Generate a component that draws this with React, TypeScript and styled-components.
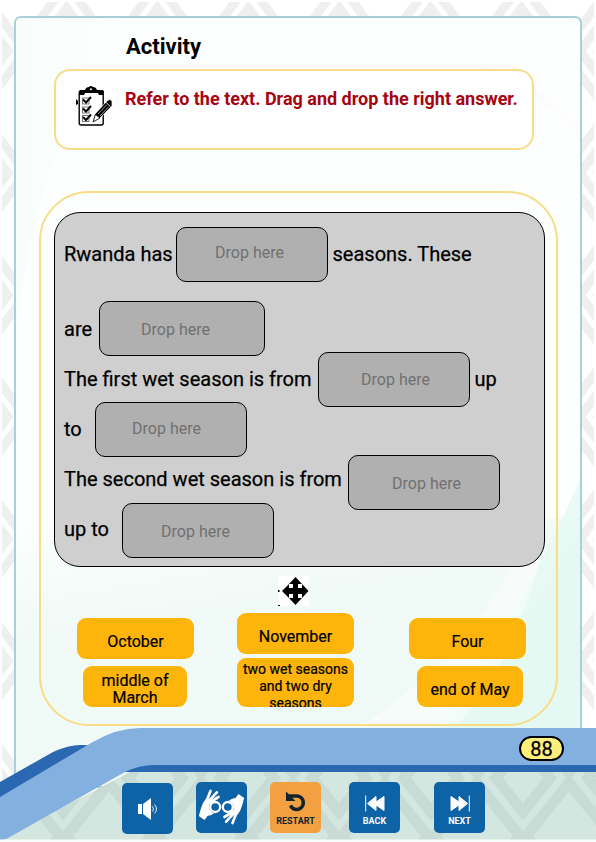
import React from "react";
import styled, { createGlobalStyle } from "styled-components";

const GlobalStyle = createGlobalStyle`
  * { box-sizing: border-box; }
  body { margin: 0; background: #fff; font-family: Roboto, sans-serif; color: #000; }
`;

const Page = styled.main`
  position: relative;
  display: flow-root;
  width: 596px;
  height: 842px;
  overflow: hidden;
  background: #fff;
`;

const Layer = styled.svg`
  position: absolute;
  inset: 0;
  display: block;
`;

const Sheet = styled.section`
  position: relative;
  width: 568px;
  height: 772px;
  margin: 16px 0 -60px 14px;
  border: 2px solid #a9d0d8;
  border-radius: 7px;
  overflow: hidden;
  background: #fdfffe;
`;

const SheetBody = styled.div`
  position: relative;
  display: flex;
  flex-direction: column;
`;

const Title = styled.h1`
  margin: 15px 0 0 110px;
  height: 36px;
  font-size: 22px;
  line-height: 28px;
  font-weight: 700;
`;

const Instruction = styled.div`
  display: flex;
  width: 480px;
  height: 81px;
  margin-left: 38px;
  padding: 15px 0 0 20px;
  border: 2px solid #f9dc87;
  border-radius: 16px;
  background: #fff;
`;

const InstructionText = styled.p`
  margin: 1px 0 0 12px;
  color: #a80410;
  font-size: 18px;
  line-height: 24px;
  font-weight: 700;
  white-space: nowrap;
`;

const Activity = styled.div`
  width: 519px;
  height: 535px;
  margin: 41px 0 0 23px;
  padding: 19px 0 0 13px;
  border: 2px solid #f9dc87;
  border-radius: 50px;
`;

const Passage = styled.div`
  width: 491px;
  height: 355px;
  padding: 16px 0 0 9px;
  border: 1px solid #000;
  border-radius: 26px;
  background: #cfcfcf;
`;

const Line = styled.div<{ $after?: number }>`
  display: flex;
  align-items: center;
  height: 50px;
  margin-bottom: ${(p) => p.$after ?? 0}px;
  font-size: 20px;
  white-space: nowrap;
`;

const Phrase = styled.span<{ $width: number }>`
  flex: none;
  width: ${(p) => p.$width}px;
  -webkit-text-stroke: 0.25px #000;
`;

const Slot = styled.div<{ $width?: number; $drop?: number; $dx?: number; $dy?: number }>`
  flex: none;
  display: flex;
  align-items: center;
  justify-content: center;
  width: ${(p) => p.$width ?? 152}px;
  height: 55px;
  margin-top: ${(p) => p.$drop ?? 0}px;
  margin-right: 4.5px;
  border: 1px solid #000;
  border-radius: 10px;
  background: #b0b0b0;
  color: #707070;
  font-size: 16px;

  span { transform: translate(${(p) => p.$dx ?? 0}px, ${(p) => p.$dy ?? 0}px); }
`;

const MoveHandle = styled.div`
  width: 31px;
  height: 30px;
  margin: 9px 0 0 224px;
  background: #fff;
  svg { display: block; }
`;

const Answers = styled.div`
  display: flex;
  margin: 7px 0 0 23px;
`;

const AnswerColumn = styled.div<{ $top: number; $left: number; $gap: number }>`
  display: flex;
  flex-direction: column;
  align-items: center;
  width: 117px;
  gap: ${(p) => p.$gap}px;
  margin: ${(p) => p.$top}px 0 0 ${(p) => p.$left}px;
`;

const Answer = styled.div<{ $width?: number; $height?: number; $pad?: number; $small?: boolean; $shift?: number }>`
  width: ${(p) => p.$width ?? 117}px;
  height: ${(p) => p.$height ?? 41}px;
  padding-top: ${(p) => p.$pad ?? 13}px;
  margin-left: ${(p) => p.$shift ?? 0}px;
  border-radius: 9px;
  background: #fdb40b;
  font-size: ${(p) => (p.$small ? 14 : 16)}px;
  line-height: 17px;
  text-align: center;
  overflow: hidden;
  -webkit-text-stroke: 0.2px #000;
`;

const Footer = styled.footer`
  position: relative;
  height: 114px;
`;

const Ribbon = styled.div`
  position: relative;
  display: flex;
  justify-content: flex-end;
  height: 54px;
  padding: 8px 32px 0 0;
`;

const PageNumber = styled.div`
  width: 45px;
  height: 25px;
  border: 2px solid #000;
  border-radius: 13px;
  background: #fff07c;
  font-size: 20px;
  line-height: 22px;
  text-align: center;
  -webkit-text-stroke: 0.3px #000;
`;

const Controls = styled.nav`
  position: relative;
  display: flex;
  margin-left: 122px;
`;

const ControlButton = styled.button<{ $gap?: number; $accent?: boolean; $drop?: boolean; $pad: number }>`
  flex: none;
  display: flex;
  flex-direction: column;
  align-items: center;
  justify-content: flex-start;
  width: 51px;
  height: 51px;
  margin: ${(p) => (p.$drop ? 1 : 0)}px ${(p) => p.$gap ?? 0}px 0 0;
  padding: ${(p) => p.$pad}px 0 0;
  border: 0;
  border-radius: 5px;
  background: ${(p) => (p.$accent ? "#f3a043" : "#0e62a6")};
  color: ${(p) => (p.$accent ? "#10242c" : "#fff")};
  font: 700 9px/11px Roboto, sans-serif;
  svg { display: block; flex: none; }
`;

const ControlLabel = styled.span`
  margin-top: 4px;
  height: 11px;
`;

const Backdrop = () => (
  <Layer width="596" height="842" viewBox="0 0 596 842">
    <defs>
      <pattern id="diamonds" width="91" height="122" x="21" y="-10" patternUnits="userSpaceOnUse">
        <g fill="none" stroke="#efefef" strokeWidth="9">
          <path d="M45.5 -6 95.5 61 45.5 128 -4.500 61Z" />
          <path d="M45.5 18 78 61 45.5 104 13 61Z" />
          <path d="M45.5 42 60 61 45.5 80 31 61Z" />
        </g>
      </pattern>
    </defs>
    <path d="M2 2H594V780H2Z" fill="url(#diamonds)" />
  </Layer>
);

const SheetTint = () => (
  <Layer width="564" height="768" viewBox="0 0 564 768">
    <defs>
      <linearGradient id="mint" x1="0" y1="0" x2=".35" y2="1">
        <stop offset="0" stopColor="#eefaf6" stopOpacity="0" />
        <stop offset=".4" stopColor="#f1faf7" />
        <stop offset="1" stopColor="#effaf6" />
      </linearGradient>
      <linearGradient id="edge" x1="0" y1="0" x2="1" y2="0">
        <stop offset="0" stopColor="#f8fdfc" />
        <stop offset="1" stopColor="#fdfffe" />
      </linearGradient>
      <linearGradient id="corner" x1="0" y1="0" x2="1" y2="1">
        <stop offset="0" stopColor="#e6faf3" stopOpacity="0" />
        <stop offset=".7" stopColor="#e3f9f2" />
        <stop offset="1" stopColor="#e5f9f3" />
      </linearGradient>
    </defs>
    <path d="M0 0H110Q30 100 0 310Z" fill="url(#edge)" />
    <path d="M0 500H564V768H0Z" fill="url(#mint)" />
    <path d="M564 460Q520 570 390 768H564Z" fill="url(#corner)" />
    <path d="M500 540Q450 640 345 708H440Q490 660 525 540Z" fill="#fff" opacity=".45" />
    <path d="M460 50Q520 62 564 115" fill="none" stroke="#fcfcff" strokeWidth="8" />
  </Layer>
);

const RibbonArt = () => (
  <Layer width="596" height="114" viewBox="0 0 596 114">
    <defs>
      <pattern id="footerDiamonds" width="92" height="116" x="17" y="-8" patternUnits="userSpaceOnUse">
        <g fill="none" stroke="#c9dbd5" strokeWidth="11">
          <path d="M46 -4 96 58 46 120 -4 58Z" />
          <path d="M46 24 73 58 46 92 19 58Z" />
        </g>
      </pattern>
    </defs>
    <path d="M0 112 130 44H596V112Z" fill="#d3e6df" />
    <path d="M0 112 130 44H596V112Z" fill="url(#footerDiamonds)" />
    <path d="M0 54 53 24Q70 16 84 17Q110 18 135 32L60 55 0 90Z" fill="#2a69b1" />
    <path d="M125 43Q140 35 160 35H596V44H125Z" fill="#2a69b1" />
    <path d="M0 69 91 15Q116 0 140 0H596V37H153Q140 37 125 44L8 110Q4 112 0 112Z" fill="#84b0df" />
    <path d="M0 111.500H596V114H0Z" fill="#fafcfb" />
  </Layer>
);

const ChecklistIcon = () => (
  <svg width="37" height="41" viewBox="0 0 37 41">
    <rect x="3.200" y="5" width="24" height="34" rx="2" fill="#fff" stroke="#000" strokeWidth="1.400" />
    <path d="M3 9V5.500Q3 4 5 4H9Q10 1 13 1Q15 -1 17 1Q20 1 21 4H26Q28 4 28 6V9H23L22 7H9L8 9Z" fill="#000" />
    <circle cx="15" cy="3.300" r="1" fill="#fff" />
    <path d="M0 13 2 15V18L0 19Z" fill="#000" />
    <g fill="none" stroke="#777" strokeWidth="1">
      <rect x="6.500" y="12" width="6.500" height="6" />
      <rect x="6.500" y="21" width="6.500" height="6" />
      <rect x="6.500" y="29.500" width="6.500" height="6" />
    </g>
    <path d="m7 13.500 3 3 5-5.500M7 22.500l3 3 5-5.500M7 31l3 3 5-5.500" fill="none" stroke="#000" strokeWidth="2" />
    <path d="M17 36 19 28 31 15Q34 12 36 15V20L24 32Z" fill="#000" stroke="#fff" strokeWidth=".7" />
    <path d="M17 36 19.500 28.500 24 32Z" fill="#fff" stroke="#000" strokeWidth=".8" />
    <path d="m22 28 9-9.500M24 30l9-9.500" fill="none" stroke="#fff" strokeWidth=".6" />
    <path d="m29 15.500 5.500 5" fill="none" stroke="#fff" strokeWidth=".8" />
  </svg>
);

const MoveIcon = () => (
  <svg width="31" height="30" viewBox="0 0 31 30">
    <path d="M17.500 1 24 8H20V12H24V8L30.500 15 24 22V18H20V22H24L17.500 29 11 22H15V18H11V22L4 15 11 8V12H15V8H11Z" fill="#000" />
    <path d="M0 14H1.500V16H0ZM0 29H2V30H0Z" fill="#000" />
  </svg>
);

const SpeakerIcon = () => (
  <svg width="20" height="24" viewBox="0 0 20 24">
    <path d="M0 7H4V17H0ZM5 7 13 1V23L5 17Z" fill="#fff" />
    <path d="M14.500 9.500Q16.500 12 14.500 14.500M16.500 7.500Q20.500 12 16.500 16.500" fill="none" stroke="#fff" strokeWidth=".9" />
  </svg>
);

const Hand = () => (
  <>
    <circle cx="51" cy="57" r="15" fill="none" stroke="#fff" strokeWidth="7" />
    <path d="M2 84 8 62Q13 44 22 34L47 38Q30 46 33 60Q36 72 48 76Q38 84 28 84L19 96Z" fill="#fff" />
    <path d="M24 42 37 9M31 40 56 13M37 42 61 27" fill="none" stroke="#fff" strokeWidth="8" strokeLinecap="round" />
  </>
);

const SignLanguageIcon = () => (
  <svg width="47" height="38" viewBox="0 0 140 114">
    <Hand />
    <g transform="rotate(180 70 57)"><Hand /></g>
  </svg>
);

const RestartIcon = () => (
  <svg width="22" height="22" viewBox="0 0 22 22">
    <path d="M4 6H12A6.700 6.700 0 1 1 5.500 15.500" fill="none" stroke="#10242c" strokeWidth="3.600" />
    <path d="M1 1.500V11H10.500L7 7.500 4 4.500Z" fill="#10242c" />
  </svg>
);

const SkipIcon = ({ back = false }: { back?: boolean }) => (
  <svg width="20" height="17" viewBox="0 0 20 17">
    <g transform={back ? "translate(20 0) scale(-1 1)" : undefined} fill="#fff" stroke="#fff" strokeLinejoin="round">
      <path d="M1 1.500 9 7V1.500L17.500 8.500 9 15.500V10L1 15.500Z" />
      <path d="M19.300 .5V16.500" fill="none" strokeWidth="1" />
    </g>
  </svg>
);

export default function App() {
  return (
    <>
      <GlobalStyle />
      <Page>
        <Backdrop />
        <Sheet>
          <SheetTint />
          <SheetBody>
            <Title>Activity</Title>
            <Instruction>
              <ChecklistIcon />
              <InstructionText>Refer to the text. Drag and drop the right answer.</InstructionText>
            </Instruction>
            <Activity>
              <Passage>
                <Line $after={25}>
                  <Phrase $width={112}>Rwanda has</Phrase>
                  <Slot $dx={-2.5} $dy={-2}><span>Drop here</span></Slot>
                  <Phrase $width={140}>seasons. These</Phrase>
                </Line>
                <Line>
                  <Phrase $width={35}>are</Phrase>
                  <Slot $width={166} $drop={-2} $dx={-6.5} $dy={1}><span>Drop here</span></Slot>
                </Line>
                <Line>
                  <Phrase $width={254}>The first wet season is from</Phrase>
                  <Slot $dx={1.5}><span>Drop here</span></Slot>
                  <Phrase $width={30}>up</Phrase>
                </Line>
                <Line>
                  <Phrase $width={31}>to</Phrase>
                  <Slot $dx={-4.5} $dy={-1}><span>Drop here</span></Slot>
                </Line>
                <Line>
                  <Phrase $width={284}>The second wet season is from</Phrase>
                  <Slot $drop={6} $dx={2.5} $dy={1}><span>Drop here</span></Slot>
                </Line>
                <Line>
                  <Phrase $width={58}>up to</Phrase>
                  <Slot $drop={2} $dx={-2.5} $dy={1}><span>Drop here</span></Slot>
                </Line>
              </Passage>
              <MoveHandle><MoveIcon /></MoveHandle>
              <Answers>
                <AnswerColumn $top={5} $left={0} $gap={7}>
                  <Answer $pad={15}>October</Answer>
                  <Answer $width={104} $pad={6} $shift={-1}>middle of<br />March</Answer>
                </AnswerColumn>
                <AnswerColumn $top={0} $left={43} $gap={4}>
                  <Answer $pad={15}>November</Answer>
                  <Answer $height={49} $pad={3} $small>two wet seasons and two dry seasons</Answer>
                </AnswerColumn>
                <AnswerColumn $top={5} $left={55} $gap={7}>
                  <Answer $pad={15}>Four</Answer>
                  <Answer $width={106} $pad={15} $shift={5}>end of May</Answer>
                </AnswerColumn>
              </Answers>
            </Activity>
          </SheetBody>
        </Sheet>
        <Footer>
          <RibbonArt />
          <Ribbon><PageNumber>88</PageNumber></Ribbon>
          <Controls>
            <ControlButton $gap={23} $drop $pad={14} aria-label="Sound"><SpeakerIcon /></ControlButton>
            <ControlButton $gap={23} $pad={6} aria-label="Sign language"><SignLanguageIcon /></ControlButton>
            <ControlButton $gap={28} $accent $pad={8}>
              <RestartIcon /><ControlLabel>RESTART</ControlLabel>
            </ControlButton>
            <ControlButton $gap={34} $pad={13}>
              <SkipIcon back /><ControlLabel>BACK</ControlLabel>
            </ControlButton>
            <ControlButton $pad={13}>
              <SkipIcon /><ControlLabel>NEXT</ControlLabel>
            </ControlButton>
          </Controls>
        </Footer>
      </Page>
    </>
  );
}
